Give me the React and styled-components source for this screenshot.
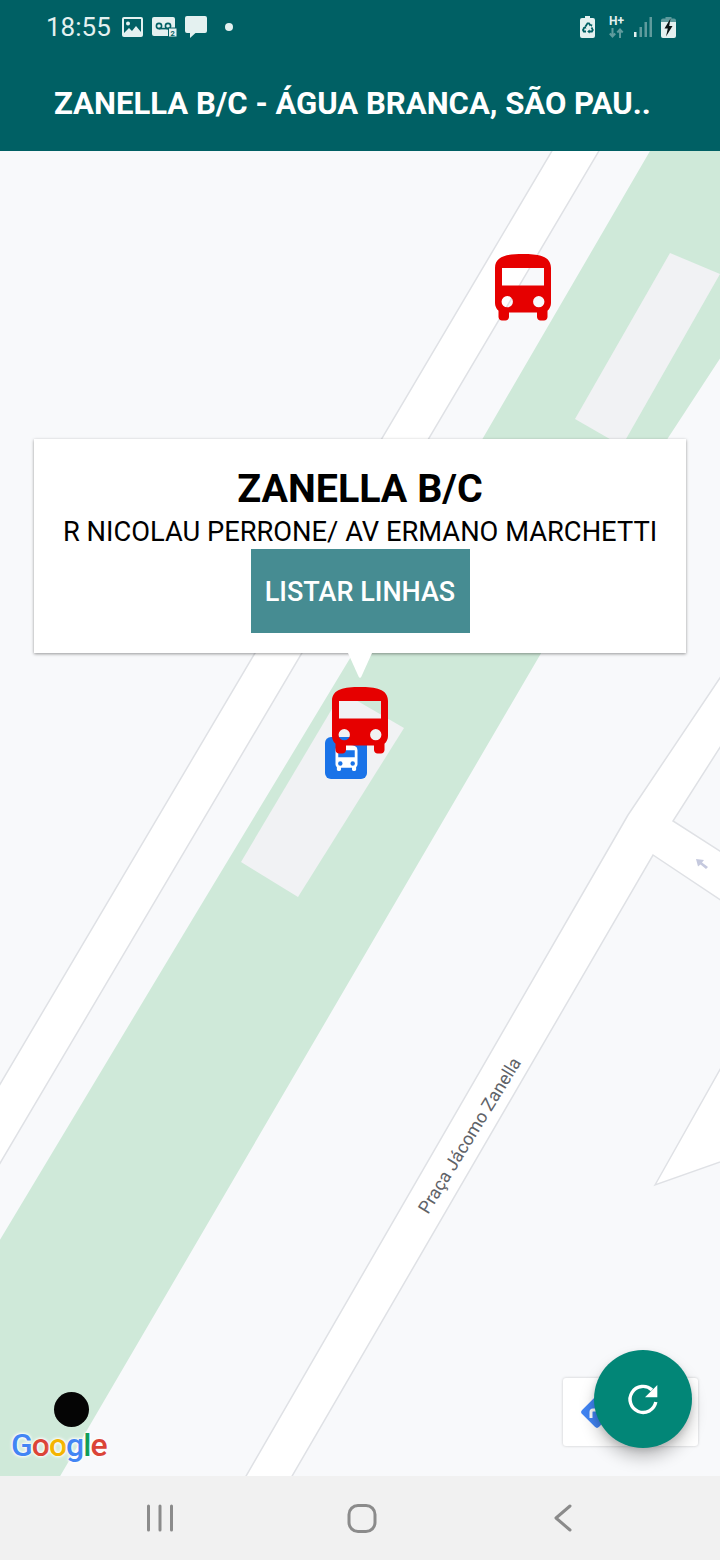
import React from "react";
import styled, { createGlobalStyle } from "styled-components";

const BUS_PATH =
  "M4 16c0 .88.39 1.67 1 2.22V20c0 .55.45 1 1 1h1c.55 0 1-.45 1-1v-1.3h8V20c0 .55.45 1 1 1h1c.55 0 1-.45 1-1v-1.78c.61-.55 1-1.34 1-2.22V6c0-3.5-3.58-4-8-4s-8 .5-8 4v10zM7.5 14a1.62 1.62 0 1 0 0 3.24 1.62 1.62 0 1 0 0-3.24zM16.5 14a1.62 1.62 0 1 0 0 3.24 1.62 1.62 0 1 0 0-3.24zM18 11H6V6h12z";

const ICON_LIGHT = "#e4f1f0";
const ICON_DIM = "#5f9b9d";
const BAR_COLOR = "#006064";

const GlobalStyle = createGlobalStyle`
  html, body {
    margin: 0;
    padding: 0;
    background: #f1f1f1;
  }
  body {
    font-family: Roboto, "Liberation Sans", sans-serif;
  }
`;

const Screen = styled.div`
  width: 720px;
  height: 1560px;
  display: flex;
  flex-direction: column;
  overflow: hidden;
`;

const AppBar = styled.header`
  height: 151px;
  flex: none;
  background: ${BAR_COLOR};
  display: flex;
  flex-direction: column;
  position: relative;
  z-index: 2;
`;

const StatusBar = styled.div`
  height: 52px;
  display: flex;
  align-items: center;
  justify-content: space-between;
  padding: 2px 44px 0 46px;
  box-sizing: border-box;
`;

const StatusGroup = styled.div`
  display: flex;
  align-items: center;
  gap: ${({ $gap }) => $gap}px;
`;

const Clock = styled.span`
  font-size: 26px;
  font-weight: 400;
  color: ${ICON_LIGHT};
  margin-right: 3px;
  line-height: 30px;
`;

const StatusIcon = styled.svg`
  display: block;
  flex: none;
`;

const NoticeDot = styled.span`
  width: 8px;
  height: 8px;
  margin-left: 9px;
  border-radius: 50%;
  background: ${ICON_LIGHT};
`;

const NetworkType = styled.div`
  width: 15px;
  display: flex;
  flex-direction: column;
  align-items: center;
  gap: 1px;
`;

const NetworkLabel = styled.span`
  font-size: 12px;
  font-weight: 700;
  line-height: 11px;
  color: ${ICON_LIGHT};
`;

const Toolbar = styled.div`
  flex: 1;
  display: flex;
  align-items: center;
  padding: 4px 0 0 54px;
`;

const Title = styled.h1`
  margin: 0;
  font-size: 31.1px;
  font-weight: 700;
  line-height: 36px;
  color: #fff;
  white-space: nowrap;
`;

const MapArea = styled.main`
  flex: 1;
  position: relative;
  overflow: hidden;
  background: #f8f9fb;
`;

const MapCanvas = styled.svg`
  display: block;
  width: 720px;
  height: 1325px;
`;

const BusPin = styled.svg`
  position: absolute;
  left: ${({ $left }) => $left}px;
  top: ${({ $top }) => $top}px;
  width: 84px;
  height: 84px;
  fill: #e60000;
  fill-rule: evenodd;
`;

const StopBadge = styled.div`
  position: absolute;
  left: 325px;
  top: 586px;
  width: 42px;
  height: 42px;
  border-radius: 6px;
  background: #1a73e8;
  display: flex;
  align-items: center;
  justify-content: center;
`;

const StopIcon = styled.svg`
  width: 33px;
  height: 33px;
  fill: #fff;
  fill-rule: evenodd;
`;

const InfoWindow = styled.section`
  position: absolute;
  left: 34px;
  top: 288px;
  width: 652px;
  height: 214px;
  box-sizing: border-box;
  padding-top: 26px;
  background: #fff;
  box-shadow: 0 1px 3px rgba(0, 0, 0, 0.4);
  display: flex;
  flex-direction: column;
  align-items: center;
`;

const InfoTail = styled.span`
  position: absolute;
  left: 314px;
  top: 214px;
  width: 24px;
  height: 25px;
  background: #fff;
  clip-path: polygon(0 0, 100% 0, 55% 96%, 50% 100%, 45% 96%);
`;

const InfoTitle = styled.h2`
  margin: 0;
  font-size: 39.4px;
  font-weight: 700;
  line-height: 47px;
  color: #000;
`;

const InfoAddress = styled.p`
  margin: 1px 0 0;
  font-size: 27.3px;
  line-height: 38px;
  color: #000;
  white-space: nowrap;
`;

const ListButton = styled.button`
  width: 219px;
  height: 84px;
  flex: none;
  margin-top: -2px;
  padding: 2px 0 0;
  border: 0;
  background: #468c92;
  color: #fff;
  font-family: inherit;
  font-size: 27px;
  font-weight: 500;
`;

const GoogleLogo = styled.div`
  position: absolute;
  left: 11px;
  top: 1275px;
  display: flex;
  font-size: 32px;
  font-weight: 500;
  line-height: 38px;
  letter-spacing: -1px;
  text-shadow: 0 0 2px #fff, 0 0 3px #fff, 0 0 4px #fff;
`;

const LogoLetter = styled.span`
  color: ${({ $color }) => $color};
`;

const BlackDot = styled.div`
  position: absolute;
  left: 54px;
  top: 1241px;
  width: 35px;
  height: 35px;
  border-radius: 50%;
  background: #050505;
`;

const DirectionsCard = styled.div`
  position: absolute;
  left: 563px;
  top: 1227px;
  width: 135px;
  height: 68px;
  border-radius: 3px;
  background: #fff;
  box-shadow: 0 0 3px rgba(0, 0, 0, 0.2);
  display: flex;
  align-items: center;
  padding-left: 16px;
  box-sizing: border-box;
`;

const Fab = styled.button`
  position: absolute;
  left: 594px;
  top: 1199px;
  width: 98px;
  height: 98px;
  padding: 0;
  border: 0;
  border-radius: 50%;
  background: #028677;
  box-shadow: 0 10px 16px rgba(0, 0, 0, 0.22), 0 3px 6px rgba(0, 0, 0, 0.12);
  display: flex;
  align-items: center;
  justify-content: center;
`;

const NavBar = styled.nav`
  height: 84px;
  flex: none;
  background: #f1f1f1;
  display: flex;
  align-items: center;
  justify-content: center;
  gap: 171.5px;
  padding: 0 0 0 3px;
  box-sizing: border-box;
`;

const NavIcon = styled.svg`
  display: block;
  width: 30px;
  height: 30px;
  margin-top: 2px;
  fill: none;
  stroke: #8b8b8b;
  stroke-width: 3;
  stroke-linecap: round;
  stroke-linejoin: round;
`;

const RoadLabel = styled.text`
  font-family: Roboto, "Liberation Sans", sans-serif;
  font-size: 18px;
  fill: #5f6368;
`;

const logoLetters = [
  ["G", "#4285f4"],
  ["o", "#db4437"],
  ["o", "#f4b400"],
  ["g", "#4285f4"],
  ["l", "#0f9d58"],
  ["e", "#db4437"],
];

const ImageIcon = () => (
  <StatusIcon width="21" height="20" viewBox="0 0 21 20">
    <rect width="21" height="20" rx="2" fill={ICON_LIGHT} />
    <rect x="2" y="2" width="17" height="16" fill={BAR_COLOR} />
    <circle cx="6" cy="6.5" r="2" fill={ICON_LIGHT} />
    <path d="M2 16l5-5 3 3 4-5 5 6v3H2z" fill={ICON_LIGHT} />
  </StatusIcon>
);

const VoicemailIcon = () => (
  <StatusIcon width="25" height="20" viewBox="0 0 25 20">
    <rect width="23" height="19" rx="2" fill={ICON_LIGHT} />
    <g fill="none" stroke={BAR_COLOR} strokeWidth="1.6">
      <circle cx="7" cy="9" r="2.6" />
      <circle cx="16" cy="9" r="2.6" />
      <path d="M7 11.6h9" />
    </g>
    <rect x="16.5" y="11" width="8.5" height="9" fill={ICON_LIGHT} stroke={BAR_COLOR} strokeWidth="1" />
    <text x="20.7" y="18.5" fontSize="7.5" fontWeight="700" textAnchor="middle" fontFamily="Roboto, sans-serif" fill={BAR_COLOR}>
      2
    </text>
  </StatusIcon>
);

const MessageIcon = () => (
  <StatusIcon width="22" height="22" viewBox="0 0 22 22">
    <path d="M2 0h18a2 2 0 0 1 2 2v13a2 2 0 0 1-2 2H10.5L5 22v-5H2a2 2 0 0 1-2-2V2a2 2 0 0 1 2-2z" fill={ICON_LIGHT} />
  </StatusIcon>
);

const RecycleBatteryIcon = () => (
  <StatusIcon width="20" height="22" viewBox="0 0 20 22">
    <path d="M5 0h5v2h3a2 2 0 0 1 2 2v16a2 2 0 0 1-2 2H2a2 2 0 0 1-2-2V4a2 2 0 0 1 2-2h3z" fill={ICON_LIGHT} />
    <g fill="none" stroke={BAR_COLOR} strokeWidth="1.8">
      <path d="M5.5 10.5l2-3.2h1.5l1.5 2.4" />
      <path d="M11.5 11.5l1.3 2.4-.9 1.6H9" />
      <path d="M6 15.5H3.8L3 14l1.2-2.2" />
    </g>
    <path d="M10 8.2l2.4.2-.6 2.7zM9.6 13.4v4l-2.4-2zM2.8 11.5l2.9-1.6.6 2.8z" fill={BAR_COLOR} />
  </StatusIcon>
);

const TransferArrows = () => (
  <StatusIcon width="15" height="10" viewBox="0 0 15 10">
    <g fill="none" stroke={ICON_DIM} strokeWidth="2">
      <path d="M3.5 0v8.5M.8 5.5l2.7 3 2.7-3" />
      <path d="M11 10V1.5M8.3 4.5l2.7-3 2.7 3" />
    </g>
  </StatusIcon>
);

const SignalIcon = () => (
  <StatusIcon width="18" height="20" viewBox="0 0 18 20">
    <rect x="0" y="15" width="2.5" height="5" fill={ICON_LIGHT} />
    <rect x="5.5" y="10" width="2.5" height="10" fill={ICON_DIM} />
    <rect x="10.5" y="5" width="2.5" height="15" fill={ICON_DIM} />
    <rect x="15.5" y="0" width="2.5" height="20" fill={ICON_DIM} />
  </StatusIcon>
);

const ChargingBatteryIcon = () => (
  <StatusIcon width="15" height="21" viewBox="0 0 15 21">
    <path d="M4.5 0h6v1.5H13a2 2 0 0 1 2 2V5H0V3.5a2 2 0 0 1 2-2h2.5z" fill={ICON_DIM} />
    <path d="M0 5h15v14a2 2 0 0 1-2 2H2a2 2 0 0 1-2-2z" fill={ICON_LIGHT} />
    <path d="M9.5 1.5L3.5 11.5h3.3L5 19.5l6.5-10.5H8.2z" fill="#0a1414" />
  </StatusIcon>
);

const MapDrawing = () => (
  <MapCanvas viewBox="0 151 720 1325">
    <rect x="0" y="151" width="720" height="1325" fill="#f8f9fb" />
    <polygon
      points="650,151 740,151 740,328 668,438 540,655 52,1490 -20,1490 -20,1273 192,920 483,438"
      fill="#cfe9d9"
    />
    <polygon points="670,253 720,274 622,446 575,419" fill="#f1f2f4" />
    <polygon points="342,692 404,728 298,897 241,862" fill="#f1f2f4" />
    <polygon
      points="559,139 606,139 -20,1197 -20,1118"
      fill="#fff"
      stroke="#dfe1e5"
      strokeWidth="1.5"
    />
    <polygon
      points="740,648 628,815 238,1490 284,1490 653,855 740,913 740,864 673,821 740,716"
      fill="#fff"
      stroke="#dfe1e5"
      strokeWidth="1.5"
    />
    <polygon points="655,1185 740,1034 740,1155" fill="#fff" stroke="#dfe1e5" strokeWidth="1.5" />
    <path d="M696 859l8 1-2 2.5 6 4.5-2 2-5.5-4.5-2.5 2z" fill="#c5c9de" />
    <RoadLabel transform="translate(428 1215) rotate(-58.5)">Praça Jácomo Zanella</RoadLabel>
  </MapCanvas>
);

const App = () => {
  return (
    <Screen>
      <GlobalStyle />
      <AppBar>
        <StatusBar>
          <StatusGroup $gap={8.5}>
            <Clock>18:55</Clock>
            <ImageIcon />
            <VoicemailIcon />
            <MessageIcon />
            <NoticeDot />
          </StatusGroup>
          <StatusGroup $gap={9.5}>
            <RecycleBatteryIcon />
            <NetworkType>
              <NetworkLabel>H+</NetworkLabel>
              <TransferArrows />
            </NetworkType>
            <SignalIcon />
            <ChargingBatteryIcon />
          </StatusGroup>
        </StatusBar>
        <Toolbar>
          <Title>ZANELLA B/C - ÁGUA BRANCA, SÃO PAU..</Title>
        </Toolbar>
      </AppBar>

      <MapArea>
        <MapDrawing />
        <BusPin $left={481} $top={96} viewBox="0 0 24 24">
          <path d={BUS_PATH} />
        </BusPin>
        <StopBadge>
          <StopIcon viewBox="0 0 24 24">
            <path d={BUS_PATH} />
          </StopIcon>
        </StopBadge>
        <BusPin $left={318} $top={529} viewBox="0 0 24 24">
          <path d={BUS_PATH} />
        </BusPin>
        <InfoWindow>
          <InfoTitle>ZANELLA B/C</InfoTitle>
          <InfoAddress>R NICOLAU PERRONE/ AV ERMANO MARCHETTI</InfoAddress>
          <ListButton>LISTAR LINHAS</ListButton>
          <InfoTail />
        </InfoWindow>
        <BlackDot />
        <GoogleLogo>
          {logoLetters.map(([letter, color], i) => (
            <LogoLetter key={i} $color={color}>
              {letter}
            </LogoLetter>
          ))}
        </GoogleLogo>
        <DirectionsCard>
          <svg width="36" height="36" viewBox="0 0 36 36">
            <rect x="6" y="6" width="24" height="24" rx="3" fill="#4285f4" transform="rotate(45 18 18)" />
            <path d="M12 24v-6a2 2 0 0 1 2-2h6" fill="none" stroke="#fff" strokeWidth="3" />
          </svg>
        </DirectionsCard>
        <Fab>
          <svg width="40" height="40" viewBox="0 0 40 40">
            <path d="M29 11A13 13 0 1 0 32.8 23" fill="none" stroke="#fff" strokeWidth="3.4" />
            <path d="M34.3 6v12.3H22z" fill="#fff" />
          </svg>
        </Fab>
      </MapArea>

      <NavBar>
        <NavIcon viewBox="0 0 30 30">
          <path d="M3.5 2v24M15 2v24M26.5 2v24" />
        </NavIcon>
        <NavIcon viewBox="0 0 30 30">
          <rect x="2" y="1.5" width="26" height="26" rx="9" />
        </NavIcon>
        <NavIcon viewBox="0 0 30 30">
          <path d="M22 2L8 14l14 12" />
        </NavIcon>
      </NavBar>
    </Screen>
  );
};

export default App;
